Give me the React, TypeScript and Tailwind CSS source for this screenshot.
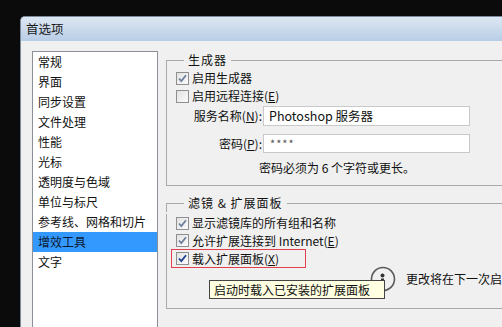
import React from "react";

const font = { fontFamily: '"Noto Sans CJK SC", "Liberation Sans", sans-serif' };

function Check({ variant }: { variant: "gray" | "off" | "blue" }) {
  return (
    <span className="w-[13px] h-[13px] border border-[#8f8f8f] bg-gradient-to-br from-[#e3e3e3] to-[#fbfbfb] flex items-center justify-center shrink-0">
      {variant !== "off" && (
        <svg width="11" height="11" viewBox="0 0 11 11">
          <path
            d="M2 5.5 L4.3 8 L9 2.2"
            fill="none"
            stroke={variant === "blue" ? "#1c3f8f" : "#6d7f9c"}
            strokeWidth="1.8"
          />
        </svg>
      )}
    </span>
  );
}

function GroupHeader({ title }: { title: string }) {
  return (
    <div className="h-[18px] flex">
      <div className="w-[18px] h-[9px] self-end border-t border-l border-[#a9a9a9]" />
      <div className="px-[4px] leading-[18px] tracking-[1px]">{title}</div>
      <div className="flex-1 h-[9px] self-end border-t border-r border-[#a9a9a9]" />
    </div>
  );
}

const items = [
  "常规",
  "界面",
  "同步设置",
  "文件处理",
  "性能",
  "光标",
  "透明度与色域",
  "单位与标尺",
  "参考线、网格和切片",
  "增效工具",
  "文字",
];

export default function App() {
  return (
    <div
      className="w-[502px] h-[327px] bg-[#0b0b0b] pt-[16px] pl-[20px] overflow-hidden text-[12px] text-[#111]"
      style={font}
    >
      <div className="w-[490px] h-[320px] bg-[#f0f0f0] rounded-tl-[5px] border-l border-t border-[#7b8a9c] flex flex-col overflow-hidden">
        <div className="h-[24px] shrink-0 bg-gradient-to-b from-[#dde7f3] to-[#b8cde6] flex items-center pl-[5px] text-[12.5px] text-[#1a1a1a]">
          首选项
        </div>
        <div className="flex pl-[11px] pt-[10px] gap-[8px]">
          <div className="w-[126px] h-[300px] bg-white border border-[#8a8f98] shrink-0">
            {items.map((t) => (
              <div
                key={t}
                className={
                  "h-[20px] leading-[20px] pl-[5px] whitespace-nowrap " +
                  (t === "增效工具" ? "bg-[#3399ff] text-[#0d1a33]" : "")
                }
              >
                {t}
              </div>
            ))}
          </div>
          <div className="flex flex-col gap-[8px] w-[360px]">
            <div>
              <GroupHeader title="生成器" />
              <div className="border-l border-r border-b border-[#a9a9a9] pl-[9px] pb-[9px]">
                <div className="h-[18px] flex items-center gap-[3px]">
                  <Check variant="gray" />
                  <span>启用生成器</span>
                </div>
                <div className="h-[18px] flex items-center gap-[3px]">
                  <Check variant="off" />
                  <span>
                    启用远程连接(<span className="underline">E</span>)
                  </span>
                </div>
                <div className="flex items-center mt-[1px]">
                  <span className="w-[87px] text-right pr-[1px] whitespace-nowrap">
                    服务名称(<span className="underline">N</span>):
                  </span>
                  <div className="w-[207px] h-[20px] bg-white border border-[#c9c9c9] flex items-center pl-[5px] text-[12.5px]">
                    Photoshop 服务器
                  </div>
                </div>
                <div className="flex items-center mt-[8px]">
                  <span className="w-[87px] text-right pr-[1px] whitespace-nowrap">
                    密码(<span className="underline">P</span>):
                  </span>
                  <div className="w-[207px] h-[19px] bg-white border border-[#c9c9c9] flex items-center pl-[6px] text-[11px] text-[#555] tracking-[1px]">
                    ****
                  </div>
                </div>
                <div className="h-[16px] leading-[16px] mt-[7px] ml-[83px]">密码必须为 6 个字符或更长。</div>
              </div>
            </div>
            <div>
              <GroupHeader title="滤镜 & 扩展面板" />
              <div className="border-l border-r border-b border-[#a9a9a9] pl-[9px] pb-[8px]">
                <div className="h-[18px] mt-[2px] flex items-center gap-[3px]">
                  <Check variant="gray" />
                  <span>显示滤镜库的所有组和名称</span>
                </div>
                <div className="h-[17px] flex items-center gap-[3px]">
                  <Check variant="gray" />
                  <span>
                    允许扩展连接到 Internet(<span className="underline">E</span>)
                  </span>
                </div>
                <div className="h-[19px] w-[135px] -ml-[5px] pl-[4px] border border-[#e2404f] flex items-center gap-[3px]">
                  <Check variant="blue" />
                  <span>
                    载入扩展面板(<span className="underline">X</span>)
                  </span>
                </div>
                <div className="relative flex items-start h-[32px]">
                  <svg width="26" height="26" viewBox="0 0 26 26" className="ml-[194px] -mt-[2px] shrink-0">
                    <circle cx="13" cy="13" r="11.5" fill="none" stroke="#5a5a5a" strokeWidth="1.6" />
                    <circle cx="12.5" cy="9.5" r="2" fill="#333" />
                    <rect x="11" y="12.5" width="3" height="8" fill="#333" />
                  </svg>
                  <span className="ml-[10px] mt-[2px] whitespace-nowrap">更改将在下一次启</span>
                  <div className="absolute left-[33px] top-[12px] w-[176px] h-[19px] pl-[4px] bg-[#ffffe1] border border-[#444] flex items-center whitespace-nowrap">
                    启动时载入已安装的扩展面板
                  </div>
                </div>
              </div>
            </div>
          </div>
        </div>
      </div>
    </div>
  );
}
